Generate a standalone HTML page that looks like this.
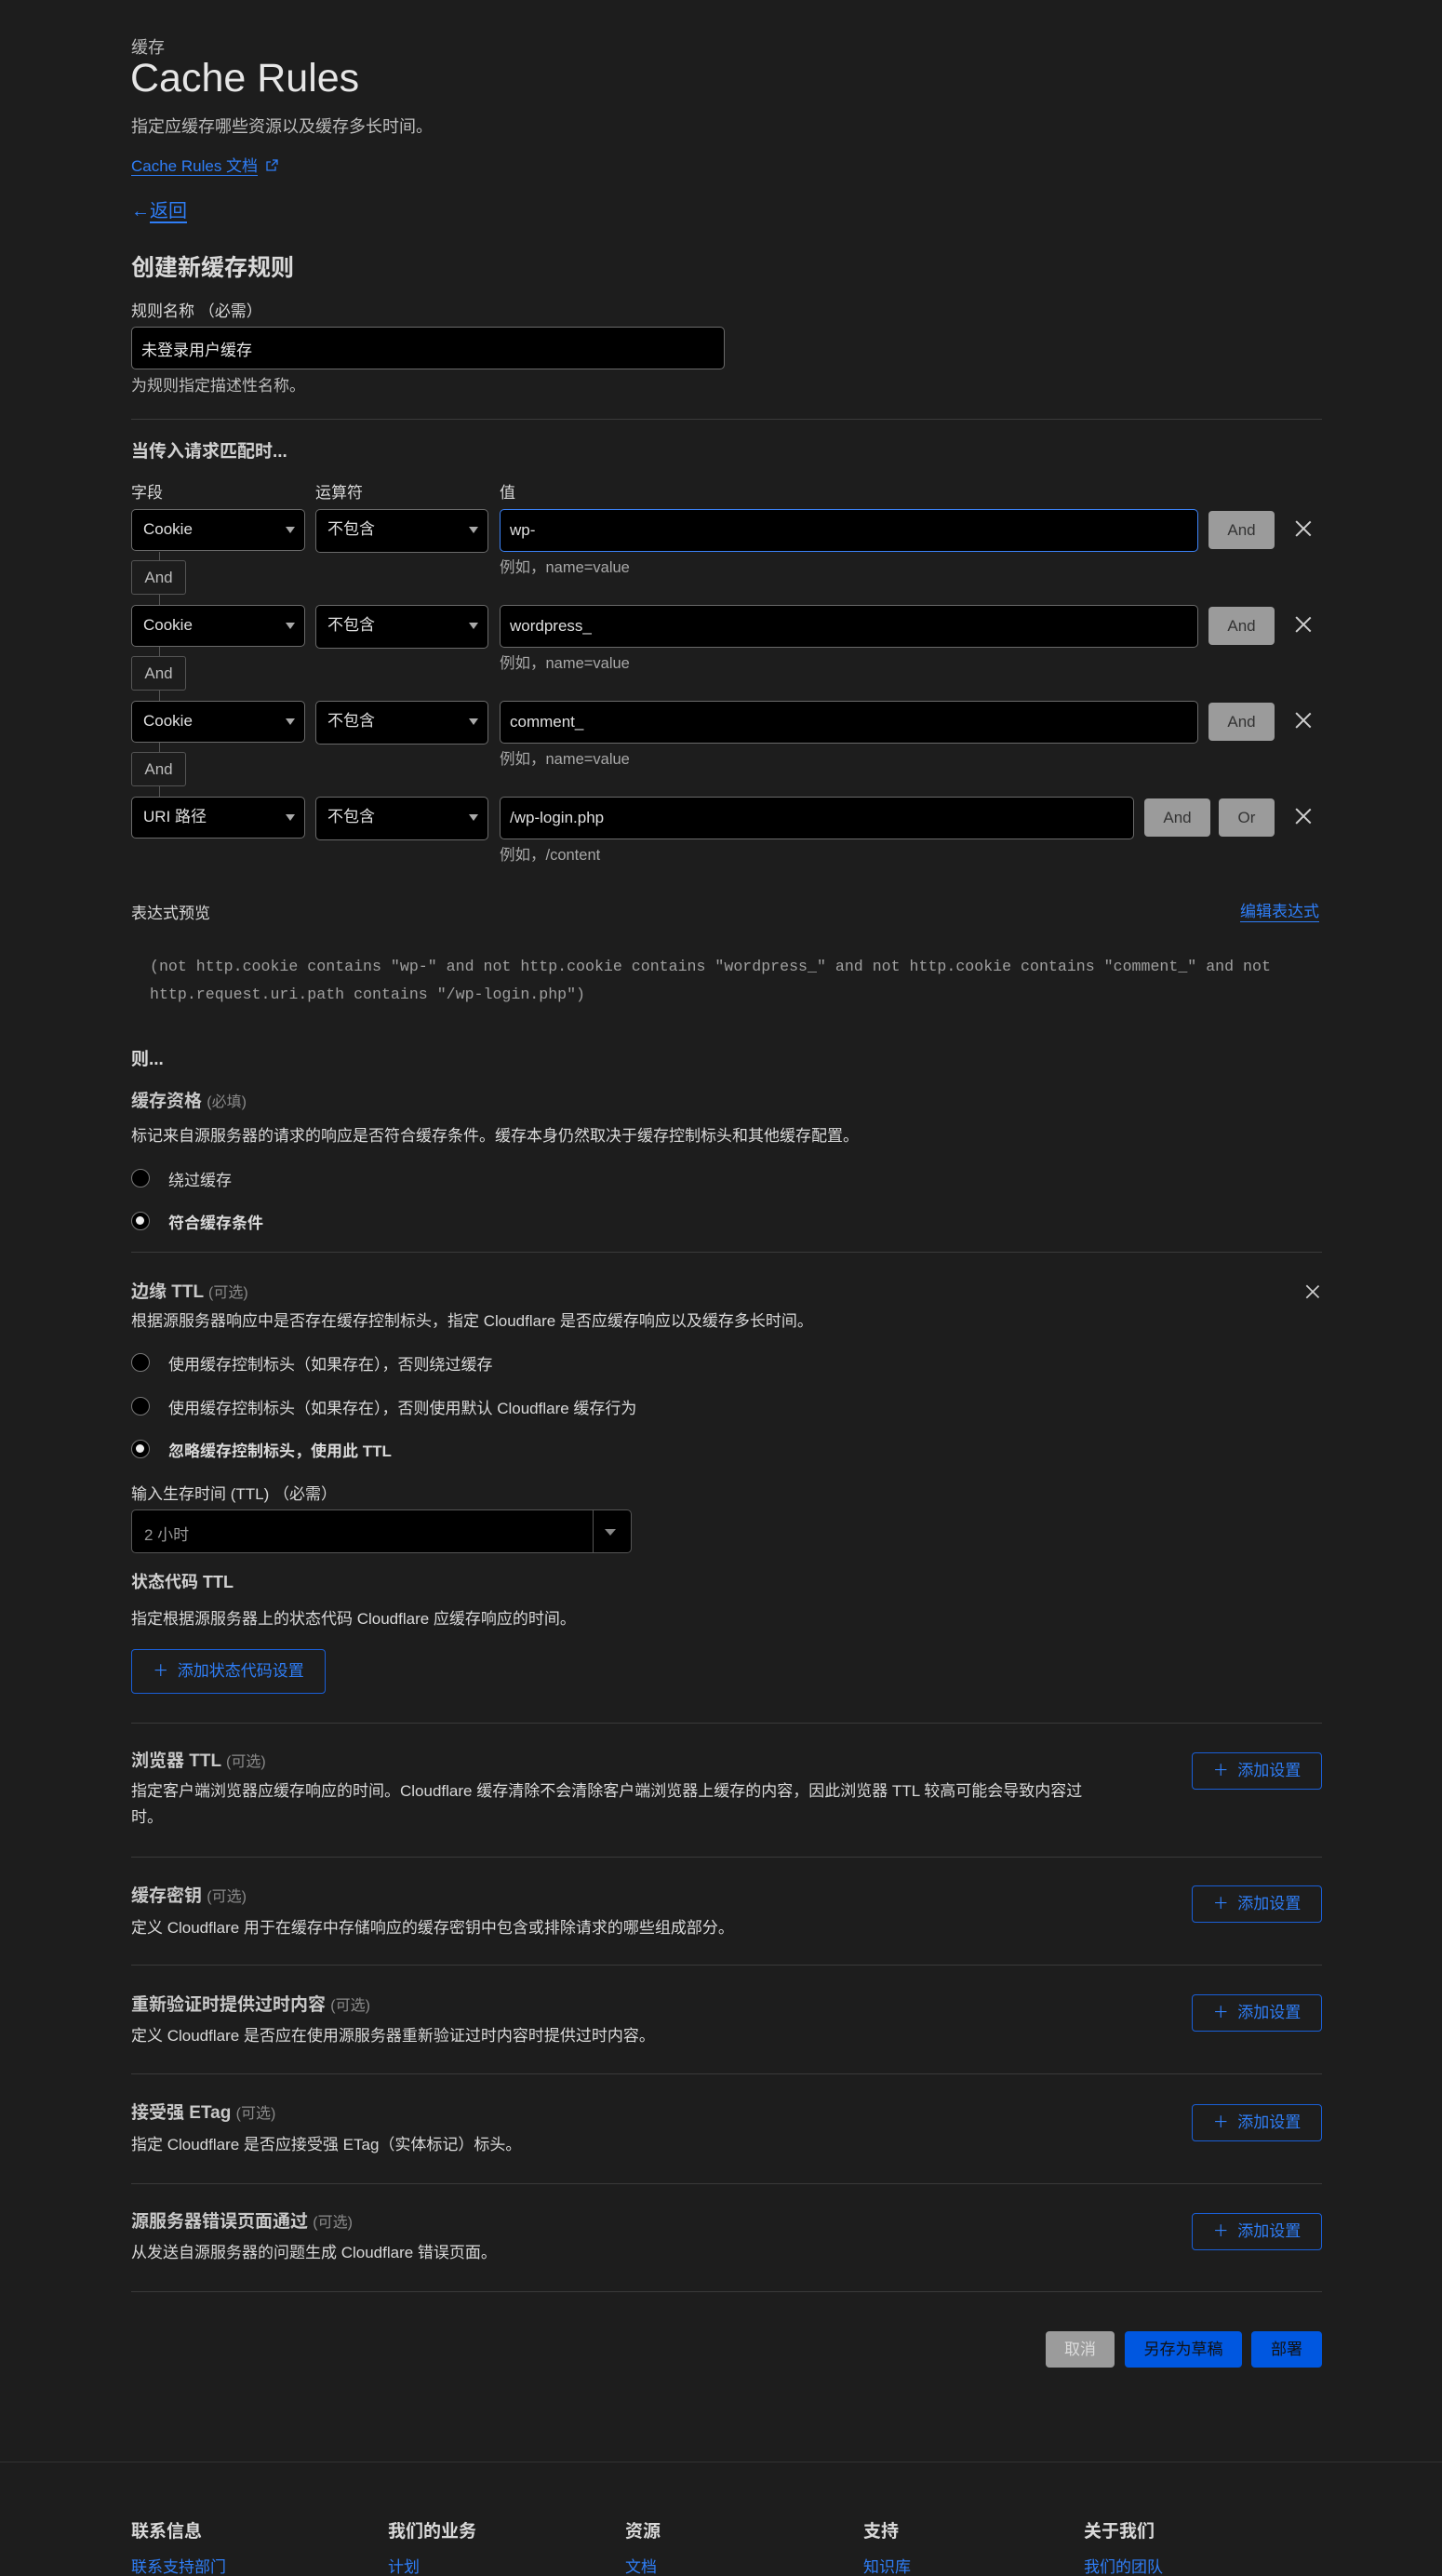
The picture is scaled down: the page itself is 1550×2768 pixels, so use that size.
<!DOCTYPE html>
<html><head><meta charset="utf-8">
<style>
*{box-sizing:border-box;margin:0;padding:0}
html,body{width:1550px;height:2768px;background:#1d1d1d;overflow:hidden}
body{position:relative;font-family:"Liberation Sans","Noto Sans CJK SC",sans-serif;color:#d9d9d9;font-size:17px}
.a{position:absolute;white-space:nowrap}
.g{color:#bdbdbd}
.b{font-weight:bold}
.h{color:#c8c8c8;font-weight:bold;font-size:19px}
.opt{color:#8a8a8a;font-weight:normal;font-size:16px}
.link{color:#2f7ef7}
.box{position:absolute;background:#000;border:1.5px solid #6a6a6a;border-radius:5px}
.sel{position:absolute;background:#000;border:1.5px solid #6a6a6a;border-radius:5px;padding-left:12px;line-height:42px;color:#e0e0e0;font-size:17px}
.sel:after{content:"";position:absolute;right:10px;top:18px;border-left:5px solid transparent;border-right:5px solid transparent;border-top:7px solid #aaa}
.val{padding-left:10px;line-height:43px;color:#e0e0e0;font-size:17px}
.gbtn{position:absolute;background:#9b9b9b;border-radius:4px;color:#333;text-align:center;line-height:41px;font-size:17px}
.conn{position:absolute;border:1px solid #555;border-radius:3px;width:59px;height:37px;text-align:center;line-height:35px;color:#bbb;font-size:17px;background:#1d1d1d}
.x{position:absolute;width:18px;height:18px}
.x:before,.x:after{content:"";position:absolute;left:8px;top:-2px;width:1.5px;height:22px;background:#cfcfcf;transform:rotate(45deg)}
.x:after{transform:rotate(-45deg)}
.hr{position:absolute;left:141px;width:1280px;height:1px;background:#3a3a3a}
.radio{position:absolute;width:20px;height:20px;border-radius:50%;background:#000;border:1.5px solid #777}
.radio.on:after{content:"";position:absolute;left:4px;top:4px;width:9px;height:9px;border-radius:50%;background:#eee}
.obtn{position:absolute;border:1.5px solid #1a5fd8;border-radius:4px;color:#2f7ef7;text-align:center;font-size:17px}
.ex{color:#a8a8a8;font-size:16.5px}
</style></head><body>
<div class="a g" style="left:141px;top:37px;font-size:18px">缓存</div>
<div class="a" style="left:140px;top:60px;font-size:43px;color:#e6e6e6">Cache Rules</div>
<div class="a g" style="left:141px;top:122px;font-size:18px">指定应缓存哪些资源以及缓存多长时间。</div>
<div class="a link" style="left:141px;top:164px;font-size:17px"><span style="border-bottom:1px solid #2f7ef7">Cache Rules 文档</span> <svg width="13" height="13" viewBox="0 0 13 13" style="margin-left:4px"><path d="M7 1h5v5M12 1L6 7M10 8v4H1V3h4" fill="none" stroke="#2f7ef7" stroke-width="1.3"/></svg></div>
<div class="a link" style="left:141px;top:210px;font-size:20px">←<span style="border-bottom:2px solid #2f7ef7">返回</span></div>
<div class="a b" style="left:141px;top:268px;font-size:25px;color:#d9d9d9">创建新缓存规则</div>
<div class="a" style="left:141px;top:320px">规则名称 （必需）</div>
<div class="box" style="left:141px;top:351px;width:638px;height:46px"></div>
<div class="a" style="left:152px;top:362px;font-size:17px;color:#e6e6e6">未登录用户缓存</div>
<div class="a g" style="left:141px;top:400px">为规则指定描述性名称。</div>
<div class="hr" style="top:450px"></div>
<div class="a b" style="left:141px;top:470px;font-size:19px;color:#d0d0d0">当传入请求匹配时...</div>
<div class="a" style="left:141px;top:515px">字段</div>
<div class="a" style="left:339px;top:515px">运算符</div>
<div class="a" style="left:537px;top:515px">值</div>

<div class="a" style="left:171px;top:593px;width:1px;height:263px;background:#555"></div>

<div class="sel" style="left:141px;top:547px;width:187px;height:45px">Cookie</div>
<div class="sel" style="left:339px;top:547px;width:186px;height:47px">不包含</div>
<div class="box val" style="left:537px;top:547px;width:751px;height:46px;border-color:#3b82f6">wp-</div>
<div class="gbtn" style="left:1299px;top:549px;width:71px;height:41px">And</div>
<div class="x" style="left:1392px;top:559px"></div>
<div class="a ex" style="left:537px;top:596px">例如，name=value</div>
<div class="conn" style="left:141px;top:602px">And</div>

<div class="sel" style="left:141px;top:650px;width:187px;height:45px">Cookie</div>
<div class="sel" style="left:339px;top:650px;width:186px;height:47px">不包含</div>
<div class="box val" style="left:537px;top:650px;width:751px;height:46px">wordpress_</div>
<div class="gbtn" style="left:1299px;top:652px;width:71px;height:41px">And</div>
<div class="x" style="left:1392px;top:662px"></div>
<div class="a ex" style="left:537px;top:699px">例如，name=value</div>
<div class="conn" style="left:141px;top:705px">And</div>

<div class="sel" style="left:141px;top:753px;width:187px;height:45px">Cookie</div>
<div class="sel" style="left:339px;top:753px;width:186px;height:47px">不包含</div>
<div class="box val" style="left:537px;top:753px;width:751px;height:46px">comment_</div>
<div class="gbtn" style="left:1299px;top:755px;width:71px;height:41px">And</div>
<div class="x" style="left:1392px;top:765px"></div>
<div class="a ex" style="left:537px;top:802px">例如，name=value</div>
<div class="conn" style="left:141px;top:808px">And</div>

<div class="sel" style="left:141px;top:856px;width:187px;height:45px">URI 路径</div>
<div class="sel" style="left:339px;top:856px;width:186px;height:47px">不包含</div>
<div class="box val" style="left:537px;top:856px;width:682px;height:46px">/wp-login.php</div>
<div class="gbtn" style="left:1230px;top:858px;width:71px;height:41px">And</div>
<div class="gbtn" style="left:1310px;top:858px;width:60px;height:41px">Or</div>
<div class="x" style="left:1392px;top:868px"></div>
<div class="a ex" style="left:537px;top:905px">例如，/content</div>

<div class="a" style="left:141px;top:967px">表达式预览</div>
<div class="a link" style="left:1333px;top:965px;border-bottom:1.5px solid #2f7ef7">编辑表达式</div>
<div class="a" style="left:161px;top:1024px;font-family:'Liberation Mono',monospace;font-size:16.6px;color:#a0a0a0;line-height:30px">(not http.cookie contains "wp-" and not http.cookie contains "wordpress_" and not http.cookie contains "comment_" and not<br>http.request.uri.path contains "/wp-login.php")</div>

<div class="a b" style="left:141px;top:1123px;font-size:19px">则...</div>
<div class="a h" style="left:141px;top:1168px">缓存资格 <span class="opt">(必填)</span></div>
<div class="a" style="left:141px;top:1206px">标记来自源服务器的请求的响应是否符合缓存条件。缓存本身仍然取决于缓存控制标头和其他缓存配置。</div>
<div class="radio" style="left:141px;top:1256px"></div>
<div class="a" style="left:181px;top:1254px">绕过缓存</div>
<div class="radio on" style="left:141px;top:1302px"></div>
<div class="a b" style="left:181px;top:1300px">符合缓存条件</div>
<div class="hr" style="top:1345px"></div>

<div class="a h" style="left:141px;top:1373px">边缘 TTL <span class="opt">(可选)</span></div>
<div class="x" style="left:1402px;top:1379px;transform:scale(.85)"></div>
<div class="a" style="left:141px;top:1405px">根据源服务器响应中是否存在缓存控制标头，指定 Cloudflare 是否应缓存响应以及缓存多长时间。</div>
<div class="radio" style="left:141px;top:1454px"></div>
<div class="a" style="left:181px;top:1452px">使用缓存控制标头（如果存在），否则绕过缓存</div>
<div class="radio" style="left:141px;top:1501px"></div>
<div class="a" style="left:181px;top:1499px">使用缓存控制标头（如果存在），否则使用默认 Cloudflare 缓存行为</div>
<div class="radio on" style="left:141px;top:1547px"></div>
<div class="a b" style="left:181px;top:1545px">忽略缓存控制标头，使用此 TTL</div>
<div class="a" style="left:141px;top:1591px">输入生存时间 (TTL) （必需）</div>
<div class="box" style="left:141px;top:1622px;width:538px;height:47px;border-color:#555"></div>
<div class="a" style="left:637px;top:1623px;width:1px;height:45px;background:#555"></div>
<div class="a" style="left:650px;top:1643px;border-left:6px solid transparent;border-right:6px solid transparent;border-top:7px solid #888"></div>
<div class="a" style="left:155px;top:1635px;color:#999;font-size:17px">2 小时</div>
<div class="a b" style="left:141px;top:1686px;color:#d0d0d0;font-size:18px">状态代码 TTL</div>
<div class="a" style="left:141px;top:1725px">指定根据源服务器上的状态代码 Cloudflare 应缓存响应的时间。</div>
<div class="obtn" style="left:141px;top:1772px;width:209px;height:48px;line-height:45px">＋&nbsp; 添加状态代码设置</div>
<div class="hr" style="top:1851px"></div>

<div class="a h" style="left:141px;top:1877px">浏览器 TTL <span class="opt">(可选)</span></div>
<div class="a" style="left:141px;top:1911px;line-height:28px">指定客户端浏览器应缓存响应的时间。Cloudflare 缓存清除不会清除客户端浏览器上缓存的内容，因此浏览器 TTL 较高可能会导致内容过<br>时。</div>
<div class="obtn" style="left:1281px;top:1883px;width:140px;height:40px;line-height:37px">＋&nbsp; 添加设置</div>
<div class="hr" style="top:1995px"></div>

<div class="a h" style="left:141px;top:2022px">缓存密钥 <span class="opt">(可选)</span></div>
<div class="a" style="left:141px;top:2057px">定义 Cloudflare 用于在缓存中存储响应的缓存密钥中包含或排除请求的哪些组成部分。</div>
<div class="obtn" style="left:1281px;top:2026px;width:140px;height:40px;line-height:37px">＋&nbsp; 添加设置</div>
<div class="hr" style="top:2111px"></div>

<div class="a h" style="left:141px;top:2139px">重新验证时提供过时内容 <span class="opt">(可选)</span></div>
<div class="a" style="left:141px;top:2173px">定义 Cloudflare 是否应在使用源服务器重新验证过时内容时提供过时内容。</div>
<div class="obtn" style="left:1281px;top:2143px;width:140px;height:40px;line-height:37px">＋&nbsp; 添加设置</div>
<div class="hr" style="top:2228px"></div>

<div class="a h" style="left:141px;top:2255px">接受强 ETag <span class="opt">(可选)</span></div>
<div class="a" style="left:141px;top:2290px">指定 Cloudflare 是否应接受强 ETag（实体标记）标头。</div>
<div class="obtn" style="left:1281px;top:2261px;width:140px;height:40px;line-height:37px">＋&nbsp; 添加设置</div>
<div class="hr" style="top:2346px"></div>

<div class="a h" style="left:141px;top:2372px">源服务器错误页面通过 <span class="opt">(可选)</span></div>
<div class="a" style="left:141px;top:2406px">从发送自源服务器的问题生成 Cloudflare 错误页面。</div>
<div class="obtn" style="left:1281px;top:2378px;width:140px;height:40px;line-height:37px">＋&nbsp; 添加设置</div>
<div class="hr" style="top:2462px"></div>

<div class="a" style="left:1124px;top:2505px;width:74px;height:39px;background:#9b9b9b;border-radius:4px;color:#ddd;text-align:center;line-height:39px">取消</div>
<div class="a" style="left:1209px;top:2505px;width:126px;height:39px;background:#0057e0;border-radius:4px;color:#111;text-align:center;line-height:39px">另存为草稿</div>
<div class="a" style="left:1345px;top:2505px;width:76px;height:39px;background:#0057e0;border-radius:4px;color:#111;text-align:center;line-height:39px">部署</div>

<div class="a" style="left:0;top:2645px;width:1550px;height:1px;background:#333"></div>
<div class="a b" style="left:141px;top:2705px;font-size:19px">联系信息</div>
<div class="a b" style="left:417px;top:2705px;font-size:19px">我们的业务</div>
<div class="a b" style="left:672px;top:2705px;font-size:19px">资源</div>
<div class="a b" style="left:928px;top:2705px;font-size:19px">支持</div>
<div class="a b" style="left:1165px;top:2705px;font-size:19px">关于我们</div>
<div class="a link" style="left:141px;top:2744px">联系支持部门</div>
<div class="a link" style="left:417px;top:2744px">计划</div>
<div class="a link" style="left:672px;top:2744px">文档</div>
<div class="a link" style="left:928px;top:2744px">知识库</div>
<div class="a link" style="left:1165px;top:2744px">我们的团队</div>
</body></html>
